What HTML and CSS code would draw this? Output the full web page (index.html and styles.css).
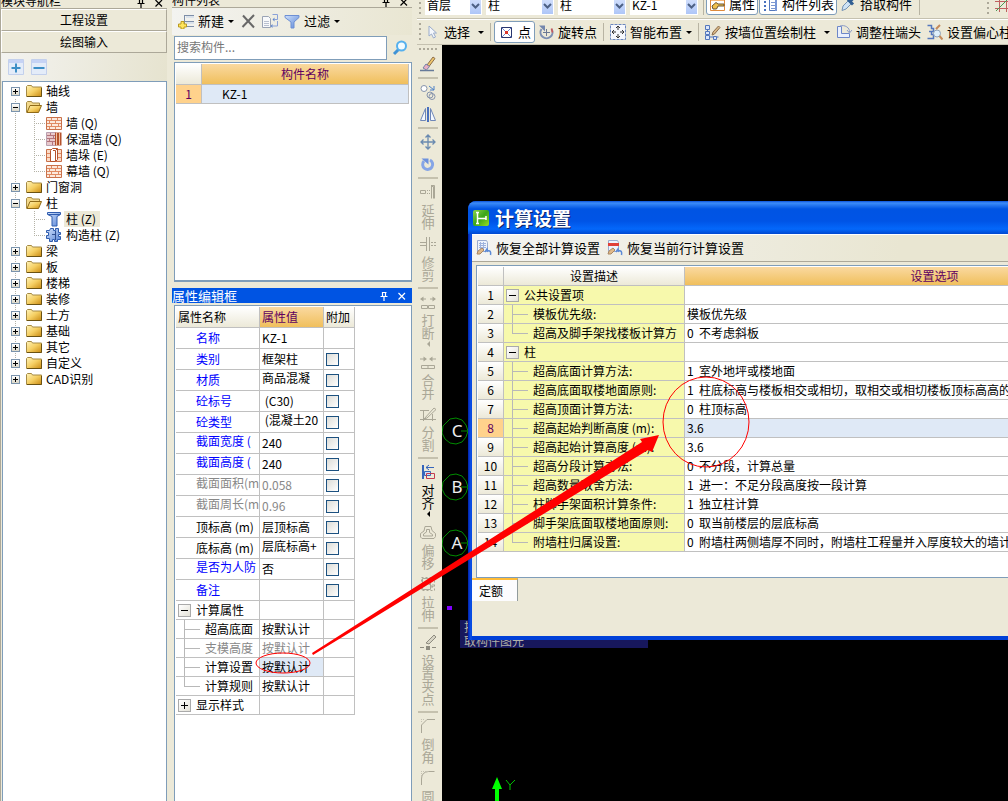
FILE: index.html
```html
<!DOCTYPE html>
<html lang="zh-CN">
<head>
<meta charset="utf-8">
<title>计算设置</title>
<link rel="stylesheet" href="styles.css">
</head>
<body>
<svg class="defs" aria-hidden="true">
  <defs>
    <linearGradient id="gold" x1="0" y1="0" x2="1" y2="1"><stop offset="0" stop-color="#fff3b8"/><stop offset=".5" stop-color="#f5cf63"/><stop offset="1" stop-color="#c98a12"/></linearGradient>
    <linearGradient id="blue" x1="0" y1="0" x2="1" y2="1"><stop offset="0" stop-color="#cfe0fa"/><stop offset="1" stop-color="#5a86d8"/></linearGradient>
    <linearGradient id="green" x1="0" y1="0" x2="1" y2="1"><stop offset="0" stop-color="#8fd44a"/><stop offset=".5" stop-color="#3aa51c"/><stop offset="1" stop-color="#9be020"/></linearGradient>
    <symbol id="folder" viewBox="0 0 16 16"><path d="M.5 13.5V3.5l1-1h4l1 1.500h9v9.500z" fill="url(#gold)" stroke="#a58a45"/><path d="M1 13.500h14.500V5" fill="none" stroke="#6b5212"/></symbol>
    <symbol id="folder-open" viewBox="0 0 16 16"><path d="M.5 13.500v-10l1-1h4l1 1.500h7v2.500" fill="#f3d98b" stroke="#a58a45"/><path d="M1 13.500l3-7h11.500l-3 7z" fill="url(#gold)" stroke="#8f6a18"/></symbol>
    <symbol id="wall" viewBox="0 0 16 16"><path d="M.5 2.500h15v12H.5z" fill="#fbe9dc" stroke="#c9714a"/><path d="M1 5.500h14M1 8.500h14M1 11.500h14M5.500 3v2M11.500 3v2M3.500 6v2M9.500 6v2M5.500 9v2M12.500 9v2M3.500 12v2M9.500 12v2" stroke="#e08a62" fill="none"/></symbol>
    <symbol id="wall-insulated" viewBox="0 0 16 16"><path d="M.5 1.500h9v13h-9z" fill="#e8c9cc" stroke="#b9a0b0"/><path d="M1 4.500h8M1 7.500h8M1 10.500h8M4.500 2v2M7.500 5v2M3.500 8v2M6.500 11v3" stroke="#b4757c"/><path d="M9 1.500h6.500v13H9z" fill="#b5532c"/><path d="M10.500 2v12M13.500 2v12" stroke="#f1c1a4"/></symbol>
    <symbol id="wall-pier" viewBox="0 0 16 16"><path d="M.5 2.500h15v12H.5z" fill="#fbdcc8" stroke="#c9714a"/><path d="M1 6.500h14M1 10.500h14" stroke="#e08a62"/><path d="M4.500 3.500l2-2h5v11l-2 2h-5z" fill="#fff" stroke="#b5532c"/><path d="M9.500 4v10M7 3.500h2.500l2-2" stroke="#b5532c" fill="none"/></symbol>
    <symbol id="column" viewBox="0 0 16 16"><path d="M1.500 1.500h13v2l-3.500 2v9.500H6V5.500l-4.500-2z" fill="url(#blue)" stroke="#2f5cae"/><path d="M2 3.500h12" stroke="#2f5cae"/></symbol>
    <symbol id="column-tie" viewBox="0 0 16 16"><path d="M4.500 1.500h3v2h2v-2h3v4h2v2h-2v2h2v3h-3v2h-3v-2h-2v2h-3v-3h-3v-3h2v-3h-2v-2h3z" fill="url(#blue)" stroke="#2f5cae"/><path d="M9.500 4v9M6 7.500h3" stroke="#2f4f90"/></symbol>
    <symbol id="plus-box" viewBox="0 0 16 16"><path d="M.5.5h15v15H.5z" fill="#e4ecf9" stroke="#c3d0ec"/><path d="M1 1h14v3H1z" fill="#c6d3f5"/><path d="M8 4.500v9M3.500 9h9" stroke="#3d8fc6" stroke-width="2"/></symbol>
    <symbol id="minus-box" viewBox="0 0 16 16"><path d="M.5.5h15v15H.5z" fill="#e4ecf9" stroke="#c3d0ec"/><path d="M1 1h14v3H1z" fill="#c6d3f5"/><path d="M2.500 9h11" stroke="#3d8fc6" stroke-width="2"/></symbol>
    <symbol id="pin" viewBox="0 0 10 10"><path d="M3 1.500h4.500M3.500 1v5M6.500 1v5M1.500 5.500h7M5 6v4" stroke="currentColor" fill="none" stroke-width="1.200"/></symbol>
    <symbol id="close" viewBox="0 0 10 10"><path d="M1.500 2l6.500 6.500M8 2L1.500 8.500" stroke="currentColor" fill="none" stroke-width="1.200"/></symbol>
    <symbol id="new" viewBox="0 0 16 16"><path d="M6 2.500h10M6 8.500h10M6 13.500h10M6.500 2v9" stroke="#7d8ea8" fill="none"/><path d="M8 4h8M8 10h8" stroke="#c3d3ea"/><path d="M3 8.500h3v2.500h2.500v3H6v2H3v-2H.5v-3H3z" fill="#ffe45c" stroke="#ba9a20"/></symbol>
    <symbol id="delete" viewBox="0 0 16 16"><path d="M3 2.500l11 12M14 2L2.500 14" stroke="#686868" stroke-width="2"/></symbol>
    <symbol id="copy" viewBox="0 0 16 16"><path d="M.5 3.500h6l2 2v9h-8z" fill="#f8f9fb" stroke="#9aa3b5"/><path d="M2 8.500h5M2 10.500h5M2 12.500h5" stroke="#b9c0d0"/><path d="M10.500 1.500h5v5h-3M15.500 8v5h-5" stroke="#8aa1d8" fill="none"/><path d="M12.500 4.500v4l-2-2zM10.500 11v4l-2-2z" fill="#5d83cc"/></symbol>
    <symbol id="filter" viewBox="0 0 16 16"><path d="M1 2.500h14v2L10 9v6H7V9L1 4.500z" fill="url(#blue)" stroke="#6d8fd4"/></symbol>
    <symbol id="search" viewBox="0 0 16 16"><path d="M6.500 9.500L2 14" stroke="#3f93d6" stroke-width="3"/><circle cx="9.500" cy="6" r="4.500" fill="#f2fbff" stroke="#55b0ee" stroke-width="2"/></symbol>
    <symbol id="cursor" viewBox="0 0 16 16"><path d="M5 2v10l2.500-2 2 4 2-1-2-4h3z" fill="#f4f7fc" stroke="#9aaccb"/></symbol>
    <symbol id="point" viewBox="0 0 16 16"><path d="M3.500 3.500h10v10h-10z" fill="#fff" stroke="#28366f"/><path d="M4 4l9 9M13 4l-9 9" stroke="#6d84ca"/><path d="M7 7h3v3H7z" fill="#d9332a"/></symbol>
    <symbol id="rotate-point" viewBox="0 0 16 16"><path d="M3.500 5A6 6 0 1 0 13.500 5" fill="none" stroke="#7d8fb2" stroke-width="2"/><path d="M1 1.500h6v6z" fill="#7487ad"/><path d="M8.500 5v7M5 8.500h7" stroke="#6b7894"/><path d="M13.500 4.500l1 4" stroke="#c55" stroke-width="1.500"/></symbol>
    <symbol id="smart" viewBox="0 0 16 16"><path d="M.5.5h15v15H.5z" fill="#f6f8fd" stroke="#6b86bd" stroke-dasharray="3 1"/><path d="M8 2v4M8 10v4M2 8h4M10 8h4M6 4l2-2 2 2M6 12l2 2 2-2M4 6L2 8l2 2M12 6l2 2-2 2" stroke="#333" fill="none"/></symbol>
    <symbol id="wall-draw" viewBox="0 0 16 16"><path d="M2.500 2v11h11" fill="none" stroke="#4970bd"/><path d="M.5 1.500h4v4h-4zM.5 7.500h4v3h-4zM.5 11.500h4v4h-4zM8.500 12.500h3v3h-3z" fill="#dce7fa" stroke="#5478bd"/><path d="M7 11l1-3 5.500-6 1.500 1.500L9.500 10z" fill="#d8b886" stroke="#8b6d4b"/></symbol>
    <symbol id="column-end" viewBox="0 0 16 16"><path d="M1.500 2.500h4v7h8v4h-12z" fill="#eaf0fd" stroke="#6d87c8"/><path d="M4 2a7 6 0 0 1 9.500 6M11 6l2.500 3L16 6" fill="none" stroke="#8a9bc6"/></symbol>
    <symbol id="eccentric" viewBox="0 0 16 16"><path d="M.5 1.500h4v3h2v3h-2v3h2v4h-6M2 7.500h3" fill="none" stroke="#5478bd" stroke-width="1.500"/><circle cx="10" cy="9.500" r="3.500" fill="#dff0fb" stroke="#8da2b8"/><path d="M12.500 12l3 3.500M9 5l4-4" stroke="#c58a5a" stroke-width="2"/></symbol>
    <symbol id="property" viewBox="0 0 16 16"><path d="M1.500 1.500h14v13h-14z" fill="#fff" stroke="#de8a3c"/><path d="M2 2h13v3H2z" fill="#f6b877"/><path d="M3 10l4-3.500 2 1.500h6v2H9l-1.500 3H4z" fill="#efc04c" stroke="#6b5430"/></symbol>
    <symbol id="list" viewBox="0 0 16 16"><path d="M2 2h2M2 6h2M2 10h2M2 14h2" stroke="#4970bd" stroke-width="2"/><path d="M7.500.5h7v14h-7z" fill="#fff" stroke="#5478bd"/><path d="M9 3.500h4M9 6.500h4M9 9.500h4M9 12.500h4" stroke="#7d98d0"/><path d="M13 1h2v14h-2z" fill="#7896d5"/></symbol>
    <symbol id="dropper" viewBox="0 0 16 16"><path d="M2 14.500L3 10l5-5 3 3-5 5z" fill="#cfe3f5" stroke="#7693b4"/><path d="M8 3.500l5 5M10 5.500L13.500 2" stroke="#315f92" stroke-width="3"/></symbol>
    <symbol id="grid-axis" viewBox="0 0 16 16"><path d="M0 5.500h16M0 12.500h16M4.500 0v16M11.500 0v16" stroke="#c06060"/><path d="M1 15L15 1" stroke="#4a9a55"/></symbol>
    <symbol id="brush" viewBox="0 0 16 16"><path d="M0 14.500h14" stroke="#667a99" stroke-width="1.500"/><path d="M7 9l6-8 2 1.500-6 8z" fill="#efc66b" stroke="#8b6d4b"/><path d="M3 12l3-4 3.500 2.500-3 3.500z" fill="#e9aec3" stroke="#7483a8"/></symbol>
    <symbol id="clone" viewBox="0 0 16 16"><circle cx="4" cy="4.500" r="3" fill="#fff" stroke="#8794ac"/><circle cx="10" cy="11" r="3" fill="none" stroke="#8794ac"/><circle cx="12" cy="12.500" r="3" fill="none" stroke="#8794ac"/><path d="M9 2l5 4M14 2v4h-4" stroke="#4a7fc6" fill="none"/></symbol>
    <symbol id="mirror" viewBox="0 0 16 16"><path d="M5.500 2.500v12H.5zM10.500 2.500v12h5z" fill="#f4f8ff" stroke="#6f87b8"/><path d="M8 1v15" stroke="#4970bd" stroke-width="2"/></symbol>
    <symbol id="move" viewBox="0 0 16 16"><path d="M8 1v14M1 8h14M5.500 3.500L8 1l2.500 2.500M5.500 12.500L8 15l2.500-2.500M3.500 5.500L1 8l2.500 2.500M12.500 5.500L15 8l-2.500 2.500" fill="none" stroke="#6a8ab0" stroke-width="1.300"/></symbol>
    <symbol id="rotate" viewBox="0 0 16 16"><path d="M4 5a5 5 0 1 0 6-1" fill="none" stroke="#86a5e6" stroke-width="3"/><path d="M1.500 2.500h7v6z" fill="#6d91dd"/></symbol>
    <symbol id="extend" viewBox="0 0 16 16"><path d="M.5 6.500h5v3h-5zM7 6.500h1M9 6.500h1M7 9.500h1M9 9.500h1M11.500 1v1.500h2v12M11.500 14.500V1.500h3v13" fill="none" stroke="#aaa797"/></symbol>
    <symbol id="trim" viewBox="0 0 16 16"><path d="M0 6.500h6M0 9.500h6M6.500 1v14M9.500 1v14M11 6.500h2M11 9.500h2M14 6.500h2M14 9.500h2" fill="none" stroke="#aaa797"/></symbol>
    <symbol id="break" viewBox="0 0 16 16"><path d="M1 5h5M10 5h5M1.500 11.500h6v3h-6zM8.500 11.500h6v3h-6z" fill="none" stroke="#aaa797"/><path d="M0 5l3.500-2.500v5zM16 5l-3.500-2.500v5z" fill="#aaa797"/></symbol>
    <symbol id="merge" viewBox="0 0 16 16"><path d="M0 5h5M11 5h5M1.500 11.500h13v3h-13zM8 12v2" fill="none" stroke="#aaa797"/><path d="M7 5L3.500 2.500v5zM9 5l3.500-2.500v5z" fill="#aaa797"/></symbol>
    <symbol id="split" viewBox="0 0 16 16"><path d="M0 4.500h9M3.500 4v11M0 13.500h16M12.500 8v7M4 13L14 2l2 1.500L7 12z" fill="none" stroke="#aaa797"/></symbol>
    <symbol id="align" viewBox="0 0 16 16"><path d="M3 1v14" stroke="#3565bb" stroke-width="2"/><path d="M4.500 7.500h6v4h-6z" fill="#cfe0fa" stroke="#3565bb"/><path d="M6.500 9.500h8v5h-8z" fill="none" stroke="#c23c50"/><path d="M6 3.500h8M9 1L6 3.500 9 6" stroke="#3565bb" fill="none"/></symbol>
    <symbol id="offset" viewBox="0 0 16 16"><path d="M5 2.500h6l1 4 3.500 3v3L14 14.500H2L.5 13V9.500L4 7z" fill="none" stroke="#aaa797"/><path d="M6.500 5.500h3v3l3 2v1.500h-9V10l3-2z" fill="none" stroke="#aaa797"/></symbol>
    <symbol id="stretch" viewBox="0 0 16 16"><path d="M2.500 2.500h8v11h-8z" fill="none" stroke="#aaa797"/><path d="M1.500 1.500h13v13h-13z" fill="none" stroke="#aaa797" stroke-dasharray="2"/><path d="M6 6l7 5M10 11h3V8" fill="none" stroke="#aaa797"/></symbol>
    <symbol id="grip-point" viewBox="0 0 16 16"><path d="M0 13.500h4M12 13.500h4" stroke="#8e8c80"/><path d="M6 12h4v4H6z" fill="#8e8c80"/><path d="M6 9l8-8 2 2-7 7z" fill="#d7d4c5" stroke="#8e8c80"/></symbol>
    <symbol id="chamfer" viewBox="0 0 16 16"><path d="M1.500 15V7L7 1.500h8" fill="none" stroke="#aaa797"/><path d="M1 1.500h4M1.500 1v4" stroke="#c4c1b2" stroke-dasharray="1"/></symbol>
    <symbol id="fillet" viewBox="0 0 16 16"><path d="M1.500 15V9q0-7 7-7.500h6" fill="none" stroke="#aaa797"/><path d="M1 1.500h7M1.500 1v6" stroke="#c4c1b2" stroke-dasharray="1"/></symbol>
    <symbol id="app" viewBox="0 0 16 16"><rect width="16" height="16" rx="2" fill="url(#green)"/><path d="M3 2.500h3M4.500 3v10M3 13.500h3M5 8.500h8M13 6v4" stroke="#fff" fill="none" stroke-width="1.500"/></symbol>
    <symbol id="restore-all" viewBox="0 0 16 16"><path d="M1.500.5h9l1 2v9h-10z" fill="#eef3fc" stroke="#9aabcf"/><path d="M3 3.500h7M3 5.500h7M3 7.500h7M4.500 2v7M7.500 2v7" stroke="#9fb3dd"/><path d="M1 14l1-3 4-3 2 2-4 4z" fill="#e0b98a" stroke="#a88763"/><path d="M9 12l2-3 1 3M11.500 11q4-1 3 4" stroke="#5c8ad6" stroke-width="1.500" fill="none"/></symbol>
    <symbol id="restore-row" viewBox="0 0 16 16"><path d="M1.500.5h9l1 2v9h-10z" fill="#eef3fc" stroke="#9aabcf"/><path d="M1 4.500h11" stroke="#e04038" stroke-width="3"/><path d="M1 14l1-3 4-3 2 2-4 4z" fill="#e0b98a" stroke="#a88763"/><path d="M9 12l2-3 1 3M11.500 11q4-1 3 4" stroke="#5c8ad6" stroke-width="1.500" fill="none"/></symbol>
    <symbol id="chevron" viewBox="0 0 11 19"><path d="M2 9l3.500 3.500L9 9" fill="none" stroke="#4d6185" stroke-width="2"/></symbol>
  </defs>
</svg>

<div class="app">
  <nav class="nav-panel">
    <header class="dock-title"><span class="dock-name">模块导航栏</span><svg class="i10"><use href="#pin"/></svg><svg class="i10"><use href="#close"/></svg></header>
    <button class="nav-button">工程设置</button>
    <button class="nav-button">绘图输入</button>
    <div class="nav-tools"><button class="tool" aria-label="展开"><svg class="i16"><use href="#plus-box"/></svg></button><button class="tool" aria-label="折叠"><svg class="i16"><use href="#minus-box"/></svg></button></div>
    <ul class="tree">
      <li class="node"><span class="toggle plus"></span><svg class="i16"><use href="#folder"/></svg><span class="label">轴线</span></li>
      <li class="node"><span class="toggle"></span><svg class="i16"><use href="#folder-open"/></svg><span class="label">墙</span></li>
      <li class="node leaf"><span class="twig"></span><svg class="i16"><use href="#wall"/></svg><span class="label">墙 (Q)</span></li>
      <li class="node leaf"><span class="twig"></span><svg class="i16"><use href="#wall-insulated"/></svg><span class="label">保温墙 (Q)</span></li>
      <li class="node leaf"><span class="twig"></span><svg class="i16"><use href="#wall-pier"/></svg><span class="label">墙垛 (E)</span></li>
      <li class="node leaf"><span class="twig last"></span><svg class="i16"><use href="#wall"/></svg><span class="label">幕墙 (Q)</span></li>
      <li class="node"><span class="toggle plus"></span><svg class="i16"><use href="#folder"/></svg><span class="label">门窗洞</span></li>
      <li class="node"><span class="toggle"></span><svg class="i16"><use href="#folder-open"/></svg><span class="label">柱</span></li>
      <li class="node leaf"><span class="twig"></span><svg class="i16"><use href="#column"/></svg><span class="label selected">柱 (Z)</span></li>
      <li class="node leaf"><span class="twig last"></span><svg class="i16"><use href="#column-tie"/></svg><span class="label">构造柱 (Z)</span></li>
      <li class="node"><span class="toggle plus"></span><svg class="i16"><use href="#folder"/></svg><span class="label">梁</span></li>
      <li class="node"><span class="toggle plus"></span><svg class="i16"><use href="#folder"/></svg><span class="label">板</span></li>
      <li class="node"><span class="toggle plus"></span><svg class="i16"><use href="#folder"/></svg><span class="label">楼梯</span></li>
      <li class="node"><span class="toggle plus"></span><svg class="i16"><use href="#folder"/></svg><span class="label">装修</span></li>
      <li class="node"><span class="toggle plus"></span><svg class="i16"><use href="#folder"/></svg><span class="label">土方</span></li>
      <li class="node"><span class="toggle plus"></span><svg class="i16"><use href="#folder"/></svg><span class="label">基础</span></li>
      <li class="node"><span class="toggle plus"></span><svg class="i16"><use href="#folder"/></svg><span class="label">其它</span></li>
      <li class="node"><span class="toggle plus"></span><svg class="i16"><use href="#folder"/></svg><span class="label">自定义</span></li>
      <li class="node"><span class="toggle plus"></span><svg class="i16"><use href="#folder"/></svg><span class="label">CAD识别</span></li>
    </ul>
  </nav>

  <section class="side">
    <header class="dock-title"><span class="dock-name">构件列表</span><svg class="i10"><use href="#pin"/></svg><svg class="i10"><use href="#close"/></svg></header>
    <div class="list-tools">
      <button class="tool"><svg class="i16"><use href="#new"/></svg>新建<span class="caret"></span></button>
      <button class="tool" aria-label="删除"><svg class="i16"><use href="#delete"/></svg></button>
      <button class="tool" aria-label="复制"><svg class="i16"><use href="#copy"/></svg></button>
      <button class="tool"><svg class="i16"><use href="#filter"/></svg>过滤<span class="caret"></span></button>
    </div>
    <div class="search-row"><input class="search" type="text" placeholder="搜索构件..." aria-label="搜索构件"><button class="tool" aria-label="搜索"><svg class="i16"><use href="#search"/></svg></button></div>
    <div class="list-box">
      <table class="grid list-grid">
        <thead><tr><th class="num"></th><th class="hot">构件名称</th></tr></thead>
        <tbody><tr><td class="num current">1</td><td class="picked item">KZ-1</td></tr></tbody>
      </table>
    </div>
    <header class="prop-title"><span class="dock-name">属性编辑框</span><svg class="i10"><use href="#pin"/></svg><svg class="i10"><use href="#close"/></svg></header>
    <div class="prop-box">
      <table class="grid props">
        <thead><tr><th class="c-name">属性名称</th><th class="c-value hot">属性值</th><th class="c-add">附加</th></tr></thead>
        <tbody class="tall">
          <tr><td class="key">名称</td><td>KZ-1</td><td></td></tr>
          <tr><td class="key">类别</td><td>框架柱</td><td><input type="checkbox" aria-label="类别"></td></tr>
          <tr><td class="key">材质</td><td class="wrap">商品混凝</td><td><input type="checkbox" aria-label="材质"></td></tr>
          <tr><td class="key">砼标号</td><td> (C30)</td><td><input type="checkbox" aria-label="砼标号"></td></tr>
          <tr><td class="key">砼类型</td><td class="wrap"> (混凝土20</td><td><input type="checkbox" aria-label="砼类型"></td></tr>
          <tr><td class="key wrap">截面宽度 (</td><td>240</td><td><input type="checkbox" aria-label="截面宽度"></td></tr>
          <tr><td class="key wrap">截面高度 (</td><td>240</td><td><input type="checkbox" aria-label="截面高度"></td></tr>
          <tr class="off"><td class="key wrap">截面面积(m</td><td>0.058</td><td><input type="checkbox" aria-label="截面面积"></td></tr>
          <tr class="off"><td class="key wrap">截面周长(m</td><td>0.96</td><td><input type="checkbox" aria-label="截面周长"></td></tr>
          <tr><td class="key plain">顶标高 (m)</td><td>层顶标高</td><td><input type="checkbox" aria-label="顶标高"></td></tr>
          <tr><td class="key plain">底标高 (m)</td><td class="wrap">层底标高+</td><td><input type="checkbox" aria-label="底标高"></td></tr>
          <tr><td class="key wrap">是否为人防</td><td>否</td><td><input type="checkbox" aria-label="是否为人防"></td></tr>
          <tr><td class="key">备注</td><td></td><td><input type="checkbox" aria-label="备注"></td></tr>
        </tbody>
        <tbody>
          <tr><td class="group"><div class="cell"><span class="fold"></span>计算属性</div></td><td></td><td></td></tr>
          <tr><td class="group"><div class="cell"><span class="branch"></span>超高底面</div></td><td>按默认计</td><td></td></tr>
          <tr class="off"><td class="group"><div class="cell"><span class="branch"></span>支模高度</div></td><td>按默认计</td><td></td></tr>
          <tr><td class="group"><div class="cell"><span class="branch"></span>计算设置</div></td><td class="picked">按默认计</td><td></td></tr>
          <tr><td class="group"><div class="cell"><span class="branch end"></span>计算规则</div></td><td>按默认计</td><td></td></tr>
          <tr><td class="group"><div class="cell"><span class="fold plus"></span>显示样式</div></td><td></td><td></td></tr>
        </tbody>
      </table>
    </div>
  </section>

  <main class="work">
    <div class="bar bar-top">
      <span class="grip"></span>
      <span class="combo first"><select aria-label="楼层"><option>首层</option></select><svg class="drop"><use href="#chevron"/></svg></span>
      <span class="combo"><select aria-label="构件类别"><option>柱</option></select><svg class="drop"><use href="#chevron"/></svg></span>
      <span class="combo"><select aria-label="构件类型"><option>柱</option></select><svg class="drop"><use href="#chevron"/></svg></span>
      <span class="combo"><select aria-label="构件"><option>KZ-1</option></select><svg class="drop"><use href="#chevron"/></svg></span>
      <span class="rule"></span>
      <button class="tool on"><svg class="i16"><use href="#property"/></svg>属性</button>
      <button class="tool on"><svg class="i16"><use href="#list"/></svg>构件列表</button>
      <button class="tool"><svg class="i16"><use href="#dropper"/></svg>拾取构件</button>
      <span class="rule"></span>
      <span class="grip next-bar"></span>
      <button class="tool" aria-label="轴网"><svg class="i16"><use href="#grid-axis"/></svg></button>
    </div>
    <div class="bar bar-draw">
      <span class="grip"></span>
      <button class="tool"><svg class="i16"><use href="#cursor"/></svg>选择<span class="caret far"></span></button>
      <span class="rule"></span>
      <button class="tool on"><svg class="i16"><use href="#point"/></svg>点</button>
      <button class="tool"><svg class="i16"><use href="#rotate-point"/></svg>旋转点</button>
      <span class="rule"></span>
      <button class="tool"><svg class="i16"><use href="#smart"/></svg>智能布置<span class="caret"></span></button>
      <span class="rule"></span>
      <button class="tool"><svg class="i16"><use href="#wall-draw"/></svg>按墙位置绘制柱<span class="caret far"></span></button>
      <button class="tool"><svg class="i16"><use href="#column-end"/></svg>调整柱端头</button>
      <button class="tool"><svg class="i16"><use href="#eccentric"/></svg>设置偏心柱</button>
    </div>
    <div class="stage">
      <div class="edit-bar">
        <span class="grip-flat"></span>
        <button class="edit" aria-label="格式刷"><svg class="i16"><use href="#brush"/></svg></button>
        <hr>
        <button class="edit" aria-label="复制"><svg class="i16"><use href="#clone"/></svg></button>
        <button class="edit" aria-label="镜像"><svg class="i16"><use href="#mirror"/></svg></button>
        <hr>
        <button class="edit" aria-label="移动"><svg class="i16"><use href="#move"/></svg></button>
        <button class="edit" aria-label="旋转"><svg class="i16"><use href="#rotate"/></svg></button>
        <hr>
        <button class="edit" disabled><svg class="i16"><use href="#extend"/></svg><span class="vert">延伸</span></button>
        <button class="edit" disabled><svg class="i16"><use href="#trim"/></svg><span class="vert">修剪</span></button>
        <hr>
        <button class="edit" disabled><svg class="i16"><use href="#break"/></svg><span class="vert">打断</span><span class="side-caret"></span></button>
        <button class="edit" disabled><svg class="i16"><use href="#merge"/></svg><span class="vert">合并</span></button>
        <button class="edit" disabled><svg class="i16"><use href="#split"/></svg><span class="vert">分割</span></button>
        <hr>
        <button class="edit"><svg class="i16"><use href="#align"/></svg><span class="vert">对齐</span><span class="side-caret"></span></button>
        <button class="edit" disabled><svg class="i16"><use href="#offset"/></svg><span class="vert">偏移</span></button>
        <button class="edit" disabled><svg class="i16"><use href="#stretch"/></svg><span class="vert">拉伸</span></button>
        <hr>
        <button class="edit" disabled><svg class="i16"><use href="#grip-point"/></svg><span class="vert">设置夹点</span></button>
        <hr>
        <button class="edit" disabled><svg class="i16"><use href="#chamfer"/></svg><span class="vert">倒角</span></button>
        <button class="edit" disabled><svg class="i16"><use href="#fillet"/></svg><span class="vert">圆角</span></button>
      </div>
      <div class="canvas">
        <svg class="drawing" width="100" height="756">
          <g fill="none" stroke="#008c00">
            <path id="axis" d="M8 374l6-1 6 2 4 5 2 6-2 6-4 5-6 2-6-1-5-4-3-6 1-7z"/>
            <use href="#axis" y="56"/><use href="#axis" y="112"/>
            <path d="M19 386h8M19 442h8M19 498h8"/>
          </g>
          <g class="axis-label"><text x="15" y="392">C</text><text x="15" y="448">B</text><text x="15" y="504">A</text></g>
          <path d="M5 561h5v4H5z" fill="#8000ff"/>
          <path d="M55 732l-5 12h3v12h4v-12h3z" fill="#00ff00"/>
          <path d="M64 735l4 5 5-5M68 740v5" fill="none" stroke="#00c000"/>
        </svg>
        <div class="hint">拾<br>取构件图元</div>
        <section class="dialog">
          <header class="dialog-title"><svg class="i16"><use href="#app"/></svg>计算设置</header>
          <div class="dialog-body">
            <div class="dialog-tools">
              <button class="tool"><svg class="i16"><use href="#restore-all"/></svg>恢复全部计算设置</button>
              <button class="tool"><svg class="i16"><use href="#restore-row"/></svg>恢复当前行计算设置</button>
            </div>
            <div class="sheet">
              <table class="grid settings">
                <thead><tr><th class="num"></th><th class="c-desc">设置描述</th><th class="hot">设置选项</th></tr></thead>
                <tbody>
                  <tr><td class="num">1</td><td class="desc"><div class="cell"><span class="fold"></span>公共设置项</div></td><td></td></tr>
                  <tr><td class="num">2</td><td class="desc"><div class="cell"><span class="branch"></span>模板优先级:</div></td><td>模板优先级</td></tr>
                  <tr><td class="num">3</td><td class="desc"><div class="cell"><span class="branch end"></span>超高及脚手架找楼板计算方</div></td><td>0  不考虑斜板</td></tr>
                  <tr><td class="num">4</td><td class="desc"><div class="cell"><span class="fold"></span>柱</div></td><td></td></tr>
                  <tr><td class="num">5</td><td class="desc"><div class="cell"><span class="branch"></span>超高底面计算方法:</div></td><td>1  室外地坪或楼地面</td></tr>
                  <tr><td class="num">6</td><td class="desc"><div class="cell"><span class="branch"></span>超高底面取楼地面原则:</div></td><td>1  柱底标高与楼板相交或相切，取相交或相切楼板顶标高高的</td></tr>
                  <tr><td class="num">7</td><td class="desc"><div class="cell"><span class="branch"></span>超高顶面计算方法:</div></td><td>0  柱顶标高</td></tr>
                  <tr><td class="num current">8</td><td class="desc"><div class="cell"><span class="branch"></span>超高起始判断高度 (m):</div></td><td class="picked">3.6</td></tr>
                  <tr><td class="num">9</td><td class="desc"><div class="cell"><span class="branch"></span>超高起始计算高度 (m):</div></td><td>3.6</td></tr>
                  <tr><td class="num">10</td><td class="desc"><div class="cell"><span class="branch"></span>超高分段计算方法:</div></td><td>0  不分段，计算总量</td></tr>
                  <tr><td class="num">11</td><td class="desc"><div class="cell"><span class="branch"></span>超高数量取舍方法:</div></td><td>1  进一：不足分段高度按一段计算</td></tr>
                  <tr><td class="num">12</td><td class="desc"><div class="cell"><span class="branch"></span>柱脚手架面积计算条件:</div></td><td>1  独立柱计算</td></tr>
                  <tr><td class="num">13</td><td class="desc"><div class="cell"><span class="branch"></span>脚手架底面取楼地面原则:</div></td><td>0  取当前楼层的层底标高</td></tr>
                  <tr><td class="num">14</td><td class="desc"><div class="cell"><span class="branch end"></span>附墙柱归属设置:</div></td><td>0  附墙柱两侧墙厚不同时，附墙柱工程量并入厚度较大的墙计</td></tr>
                </tbody>
              </table>
            </div>
            <div class="tabs"><button class="tab">定额</button></div>
          </div>
        </section>
      </div>
    </div>
  </main>
</div>

<svg class="notes" width="1008" height="801" aria-hidden="true">
  <ellipse cx="283" cy="663" rx="27" ry="10" fill="none" stroke="#f00"/>
  <ellipse cx="706" cy="422" rx="43" ry="45" fill="none" stroke="#f00"/>
  <path d="M312 653L642 442L640 439L659 435L652 452L648 450L313 655z" fill="#f00"/>
</svg>
</body>
</html>
```

FILE: styles.css
```css
* { box-sizing: border-box; }

body {
  margin: 0;
  height: 100vh;
  overflow: hidden;
  background: #ece9d8;
  color: #000;
  font: 12px/16px "Noto Sans CJK SC", "Noto Sans", sans-serif;
}

button, input, select { font: inherit; color: inherit; }
button { padding: 0; border: 0; background: none; }
.defs { position: absolute; width: 0; height: 0; }
.i16 { flex: none; width: 16px; height: 16px; }
.i10 { flex: none; width: 10px; height: 10px; }

.app { display: flex; gap: 5px; height: 100%; }

/* Docked panels */
.nav-panel { flex: none; width: 167px; display: flex; flex-direction: column; border-left: 1px solid #aca899; }
.side { flex: none; width: 240px; display: flex; flex-direction: column; }

.dock-title {
  flex: none;
  display: flex;
  align-items: flex-end;
  gap: 8px;
  height: 8px;
  padding-right: 3px;
  overflow: hidden;
  border-bottom: 1px solid #aca899;
}
.nav-panel .dock-title { height: 9px; }
.dock-name { flex: 1; line-height: 14px; }

.nav-button {
  flex: none;
  height: 22px;
  border: 1px solid #aca899;
  border-top-color: #fff;
  border-left-color: #fff;
}

.nav-tools {
  flex: none;
  display: flex;
  gap: 7px;
  align-items: center;
  height: 28px;
  padding-left: 7px;
  background: linear-gradient(100deg, #f3f3f0, #e6e3cf);
}

.tree {
  flex: 1;
  margin: 0 0 0 1px;
  padding: 1px 0 0 8px;
  list-style: none;
  background: #fff;
  border: 1px solid #7f9db9;
  border-bottom: 0;
}
.node {
  display: flex;
  align-items: center;
  height: 16px;
  background: repeating-linear-gradient(#b4b2a6 0 1px, #fff 1px 2px) 4px 0 / 1px 100% no-repeat;
}
.node:first-child, .node:last-child { background: none; }
.toggle {
  width: 9px;
  height: 9px;
  margin-right: 6px;
  border: 1px solid #7b94ad;
  background: linear-gradient(#000, #000) 50% 50% / 5px 1px no-repeat, linear-gradient(#fff, #dcd8c8);
}
.toggle.plus {
  background: linear-gradient(#000, #000) 50% 50% / 5px 1px no-repeat, linear-gradient(#000, #000) 50% 50% / 1px 5px no-repeat, linear-gradient(#fff, #dcd8c8);
}
.twig {
  width: 12px;
  height: 16px;
  margin-left: 23px;
  background: repeating-linear-gradient(#b4b2a6 0 1px, #fff 1px 2px) 0 0 / 1px 100% no-repeat, repeating-linear-gradient(90deg, #b4b2a6 0 1px, #fff 1px 2px) 0 50% / 100% 1px no-repeat;
}
.twig.last {
  background: repeating-linear-gradient(#b4b2a6 0 1px, #fff 1px 2px) 0 0 / 1px 8px no-repeat, repeating-linear-gradient(90deg, #b4b2a6 0 1px, #fff 1px 2px) 0 50% / 100% 1px no-repeat;
}
.label { margin-left: 2px; padding: 0 2px; white-space: nowrap; }
.label.selected { background: #ece9d8; padding-right: 4px; }

/* Toolbars */
.tool { flex: none; display: flex; align-items: center; gap: 4px; height: 22px; font-size: 13px; line-height: 18px; white-space: nowrap; }
.caret { border: 3px solid transparent; border-top-color: #000; border-bottom: 0; }
.caret.far { margin-left: 4px; }

.list-tools {
  flex: none;
  display: flex;
  align-items: center;
  gap: 6px;
  height: 27px;
  padding: 0 0 1px 6px;
  background: linear-gradient(100deg, #f3f3f0, #e9e6d2);
}
.search-row { flex: none; display: flex; gap: 5px; align-items: center; padding: 1px 4px 2px 2px; }
.search {
  flex: 1;
  min-width: 0;
  height: 24px;
  padding: 0 2px 4px;
  border: 1px solid #7f9db9;
  background: #fff;
}
.search::placeholder { color: #777; opacity: 1; }

.list-box { flex: 0 0 220px; margin-left: 2px; padding: 1px; background: #fff; border: 1px solid #7f9db9; border-bottom-width: 2px; }

.prop-title {
  flex: none;
  display: flex;
  align-items: center;
  gap: 8px;
  height: 15px;
  margin: 6px 0 2px;
  padding-right: 5px;
  background: #0054e3;
  color: #fff;
}
.prop-title .dock-name { font-size: 13px; }
.prop-box { flex: 1; margin-left: 2px; padding: 1px; background: #fff; border: 1px solid #7f9db9; border-bottom: 0; }

/* Grids */
.grid { border-collapse: separate; border-spacing: 0; table-layout: fixed; }
.grid th, .grid td {
  height: 19px;
  padding: 0 2px;
  overflow: hidden;
  border: 0 solid #c0c0c0;
  border-width: 0 1px 1px 0;
  line-height: 16px;
  font-weight: normal;
  text-align: left;
  white-space: pre;
}
.grid th { background: linear-gradient(#fff, #ece9d8); }
.grid th.hot { background: linear-gradient(#fad9a0, #f0bf5c); color: #600060; }
.grid .num { width: 26px; padding: 0; text-align: center; background: linear-gradient(#fff, #ece9d8); }
.grid td.current { background: #ffd28c; color: #600060; }
.grid td.picked { background: #dfe9f6; }

.list-grid { width: 233px; max-width: 100%; }
.list-grid th { height: 21px; }
.list-grid th, .settings th { text-align: center; }
.list-grid td.item { padding-left: 20px; }

.props { width: 179px; }
.props th { height: 21px; }
.c-name { width: 84px; }
.c-value { width: 64px; }
.c-add { width: 31px; }
.tall td { height: 21px; }
.tall .wrap { vertical-align: top; }
.grid td.key { padding-left: 20px; padding-right: 0; color: #00f; }
.grid td.plain { color: #000; }
.grid .off td { color: #888; }
.grid td.group, .grid td.desc { padding: 0; }

input[type="checkbox"] {
  appearance: none;
  display: block;
  width: 13px;
  height: 13px;
  margin: 0;
  border: 1px solid #1c5180;
  background: linear-gradient(135deg, #dcdcd7, #fff);
}

.cell { display: flex; align-items: center; height: 18px; }
.fold {
  flex: none;
  width: 13px;
  height: 13px;
  margin: 0 5px 0 2px;
  border: 1px solid #aaa;
  background: linear-gradient(#000, #000) 50% 50% / 7px 1px no-repeat, linear-gradient(135deg, #fff, #e4e2d8);
}
.fold.plus {
  background: linear-gradient(#000, #000) 50% 50% / 7px 1px no-repeat, linear-gradient(#000, #000) 50% 50% / 1px 7px no-repeat, linear-gradient(135deg, #fff, #e4e2d8);
}
.branch {
  flex: none;
  width: 16px;
  height: 18px;
  margin: 0 5px 0 8px;
  background: linear-gradient(#b8b8b8, #b8b8b8) 0 0 / 1px 100% no-repeat, linear-gradient(#b8b8b8, #b8b8b8) 0 9px / 100% 1px no-repeat;
}
.branch.end {
  background: linear-gradient(#b8b8b8, #b8b8b8) 0 0 / 1px 9px no-repeat, linear-gradient(#b8b8b8, #b8b8b8) 0 9px / 100% 1px no-repeat;
}

/* Work area */
.work { flex: 1; min-width: 0; display: flex; flex-direction: column; }
.bar { flex: none; display: flex; overflow: hidden; border-bottom: 1px solid #c5c1b0; }
.grip { flex: none; width: 2px; height: 18px; background: repeating-linear-gradient(#aca899 0 2px, #ece9d8 2px 5px); }
.rule { flex: none; width: 1px; height: 18px; background: #b8b4a3; }

.bar-top { align-items: flex-end; height: 19px; padding: 0 0 3px 2px; }
.combo { flex: none; display: flex; position: relative; width: 68px; height: 21px; margin-left: 4px; background: #fff; }
.combo.first { width: 57px; }
.combo select { width: 100%; padding: 0 3px 0 2px; border: 0; background: none; appearance: none; font-size: 12px; }
.drop {
  position: absolute;
  right: 1px;
  bottom: 1px;
  width: 11px;
  height: 19px;
  background: linear-gradient(#dbe6fd, #aec6f8);
  pointer-events: none;
}
.bar-top .rule { margin: 0 2px 0 5px; }
.bar-top .tool { padding: 0 2px; }
.bar-top .on { margin-right: 1px; }
.bar-top .next-bar { margin: 0 4px 0 65px; }
.tool.on { background: #fff; border: 1px solid #7f9db9; border-radius: 3px; }

.bar-draw { align-items: center; height: 26px; padding-left: 2px; border-top: 1px solid #fff; }
.bar-draw .tool { padding: 0 3px; }
.bar-draw .rule { margin: 0 3px; }

.stage { flex: 1; min-height: 0; display: flex; }
.edit-bar { flex: none; width: 25px; padding-right: 3px; display: flex; flex-direction: column; align-items: center; overflow: hidden; }
.edit-bar hr { flex: none; width: 20px; height: 2px; margin: 2px 0; border: 0; background: #c5c1ae; }
.grip-flat { flex: none; width: 18px; height: 2px; margin: 3px 0; background: repeating-linear-gradient(90deg, #aca899 0 2px, #ece9d8 2px 4px); }
.edit { flex: none; display: flex; flex-direction: column; align-items: center; padding: 3px 0; }
.edit:disabled { color: #aaa797; }
.vert { width: 13px; margin: 3px 0 1px; font-size: 13px; line-height: 13px; }
.side-caret { margin: 1px 0; border: 3px solid transparent; border-right-color: currentColor; border-left: 0; }

.canvas { flex: 1; position: relative; overflow: hidden; background: #000; }
.drawing { position: absolute; left: 0; top: 0; }
.axis-label { fill: #eee; font: 17px "Noto Sans", sans-serif; text-anchor: middle; }
.hint {
  position: absolute;
  left: 18px;
  top: 575px;
  width: 188px;
  padding: 0 4px;
  background: #17175c;
  color: #b0b0a8;
  font-size: 12px;
  line-height: 14px;
}

/* Settings window */
.dialog {
  position: absolute;
  left: 26px;
  top: 156px;
  width: 722px;
  padding: 0 4px 4px;
  border-radius: 8px 8px 0 0;
  background: linear-gradient(90deg, #001fa8, #0d57ef 3px, #0040d8 4px, #0040d8);
}
.dialog-title {
  display: flex;
  align-items: center;
  gap: 6px;
  height: 33px;
  margin: 0 -4px;
  padding: 0 5px;
  border-radius: 8px 8px 0 0;
  background: linear-gradient(#0a50d8, #3c8cf8 2px, #0054e3 8px, #0054e6 20px, #0468fb 28px, #0048d0);
  color: #fff;
  font-size: 19px;
  font-weight: bold;
  line-height: 24px;
  text-shadow: 1px 1px #0a246a;
}
.dialog-body { background: #ece9d8; padding-bottom: 35px; }
.dialog-tools {
  display: flex;
  align-items: center;
  gap: 7px;
  height: 28px;
  padding: 0 0 1px 4px;
  border-top: 1px solid #fff;
  border-bottom: 1px solid #aca899;
  background: linear-gradient(100deg, #f4f4f2, #e9e6d2 60%);
}
.sheet { margin: 3px 0 0 4px; padding: 1px 1px 25px; border: 1px solid #7f9db9; background: #fff; }
.settings { width: 707px; }
.c-desc { width: 181px; }
.grid td.desc { background: #f7f9ac; }
.tabs { display: flex; }
.tab { width: 46px; height: 23px; padding-left: 7px; background: #fcfcfe; border-top: 2px solid #ffbc38; border-right: 1px solid #919b9c; text-align: left; }

.notes { position: absolute; left: 0; top: 0; pointer-events: none; }
```
